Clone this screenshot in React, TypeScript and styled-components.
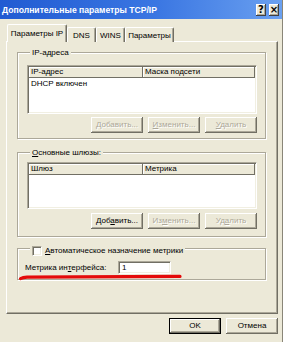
import React from "react";
import styled, { createGlobalStyle } from "styled-components";

const GlobalStyle = createGlobalStyle`
  html, body { margin: 0; padding: 0; background: #ece9d8; }
  body { font-family: "Liberation Sans", Arial, sans-serif; font-size: 8px; color: #000; }
  * { box-sizing: border-box; }
`;

const Window = styled.div`
  width: 283px;
  height: 342px;
  display: flex;
  flex-direction: column;
  background: #ece9d8;
  border-right: 1px solid #8a8678;
  overflow: hidden;
`;

const TitleBar = styled.div`
  height: 19px;
  display: flex;
  align-items: center;
  justify-content: space-between;
  padding: 0 3px 0 2px;
  background: linear-gradient(90deg, #215bd2 0%, #3a76e2 55%, #6aa0f0 100%);
`;

const Title = styled.span`
  color: #fff;
  font-weight: bold;
  font-size: 8.6px;
  white-space: nowrap;
`;

const TitleButtons = styled.div`
  display: flex;
  gap: 3px;
`;

const TitleButton = styled.div`
  width: 10px;
  height: 12px;
  background: #ece9d8;
  display: flex;
  align-items: center;
  justify-content: center;
  font-weight: bold;
  font-size: 10px;
  font-family: "DejaVu Sans", sans-serif;
  line-height: 1;
  color: #000;
  box-shadow: inset -1px -1px 0 #404040, inset 1px 1px 0 #fff, inset -2px -2px 0 #aca899;
`;

const Body = styled.div`
  flex: 1;
  display: flex;
  flex-direction: column;
  padding: 5px 4px 0 6px;
`;

const TabStrip = styled.div`
  display: flex;
  align-items: flex-end;
  height: 18px;
  padding-left: 1px;
  margin-bottom: -1px;
  position: relative;
  z-index: 1;
`;

const Tab = styled.div<{ $active?: boolean; $w: number }>`
  width: ${(p) => p.$w}px;
  height: ${(p) => (p.$active ? 18 : 15)}px;
  display: flex;
  align-items: center;
  justify-content: center;
  padding-bottom: ${(p) => (p.$active ? 1 : 0)}px;
  background: #ece9d8;
  border-top: 1px solid #fff;
  border-left: 1px solid #fff;
  border-right: 1px solid #716f64;
  box-shadow: inset -1px 0 0 #aca899;
  border-radius: 2px 2px 0 0;
  white-space: nowrap;
`;

const Panel = styled.div`
  height: 273px;
  background: #ece9d8;
  border-top: 1px solid #fff;
  border-left: 1px solid #fff;
  border-right: 1px solid #716f64;
  border-bottom: 1px solid #716f64;
  box-shadow: inset -1px -1px 0 #aca899;
  padding: 10px 11px 0 10px;
  display: flex;
  flex-direction: column;
`;

const Group = styled.div<{ $mt: number; $pb: number }>`
  position: relative;
  margin-top: ${(p) => p.$mt}px;
  border: 1px solid #aca899;
  box-shadow: inset 1px 1px 0 #fff, 1px 1px 0 #fff;
  display: flex;
  flex-direction: column;
  padding: 0 8px ${(p) => p.$pb}px 9px;
`;

const Legend = styled.div<{ $mt: number }>`
  align-self: flex-start;
  margin: ${(p) => p.$mt}px 0 0 3px;
  padding: 0 2px;
  height: 11px;
  line-height: 11px;
  background: #ece9d8;
  display: flex;
  align-items: center;
  gap: 3px;
  white-space: nowrap;
`;

const ListBox = styled.div<{ $h: number; $mt: number }>`
  height: ${(p) => p.$h}px;
  margin-top: ${(p) => p.$mt}px;
  background: #fff;
  border: 1px solid;
  border-color: #aca899 #fff #fff #aca899;
  box-shadow: inset 1px 1px 0 #716f64, inset -1px -1px 0 #f1efe2;
  padding: 1px;
  display: flex;
  flex-direction: column;
`;

const ListHeader = styled.div`
  display: grid;
  grid-template-columns: 114px 1fr;
  height: 11px;
`;

const HeaderCell = styled.div`
  background: #ece9d8;
  padding-left: 2px;
  line-height: 10px;
  box-shadow: inset -1px -1px 0 #716f64, inset 1px 1px 0 #fff;
  white-space: nowrap;
  overflow: hidden;
`;

const ListRow = styled.div`
  height: 11px;
  line-height: 11px;
  padding-left: 2px;
  white-space: nowrap;
`;

const ButtonRow = styled.div<{ $mt: number }>`
  display: flex;
  justify-content: flex-end;
  gap: 5px;
  margin-top: ${(p) => p.$mt}px;
`;

const Button = styled.button<{ $default?: boolean }>`
  width: 52px;
  height: 16px;
  padding: 0;
  font-family: inherit;
  font-size: 8px;
  color: #000;
  background: #ece9d8;
  border: ${(p) => (p.$default ? "1px solid #000" : "none")};
  box-shadow: inset -1px -1px 0 #716f64, inset 1px 1px 0 #fff, inset -2px -2px 0 #aca899;
  line-height: 1;
  &:disabled {
    color: #aca899;
    text-shadow: 1px 1px 0 #fff;
  }
`;

const Checkbox = styled.div`
  width: 10px;
  height: 10px;
  background: #fff;
  border: 1px solid;
  border-color: #aca899 #fff #fff #aca899;
  box-shadow: inset 1px 1px 0 #716f64, inset -1px -1px 0 #f1efe2;
`;

const MetricRow = styled.div`
  display: flex;
  align-items: center;
  height: 13px;
  margin-top: 5px;
  padding-left: 7px;
  margin-left: -9px;
`;

const MetricLabel = styled.span`
  width: 93px;
  white-space: nowrap;
`;

const Input = styled.div`
  width: 53px;
  height: 13px;
  background: #fff;
  border: 1px solid;
  border-color: #aca899 #fff #fff #aca899;
  box-shadow: inset 1px 1px 0 #716f64, inset -1px -1px 0 #f1efe2;
  padding-left: 3px;
  line-height: 11px;
`;

const Annotation = styled.svg`
  position: absolute;
  left: 2px;
  top: 25px;
  overflow: visible;
`;

const Footer = styled.div`
  display: flex;
  justify-content: flex-end;
  gap: 5px;
  margin-top: 4px;
`;

const tabs = [
  { label: "Параметры IP", w: 60, active: true },
  { label: "DNS", w: 29 },
  { label: "WINS", w: 29 },
  { label: "Параметры", w: 49 },
];

export default function App() {
  return (
    <>
      <GlobalStyle />
      <Window>
        <TitleBar>
          <Title>Дополнительные параметры TCP/IP</Title>
          <TitleButtons>
            <TitleButton>?</TitleButton>
            <TitleButton>×</TitleButton>
          </TitleButtons>
        </TitleBar>
        <Body>
          <TabStrip>
            {tabs.map((t) => (
              <Tab key={t.label} $w={t.w} $active={t.active}>
                {t.label}
              </Tab>
            ))}
          </TabStrip>
          <Panel>
            <Group $mt={0} $pb={5}>
              <Legend $mt={-6}>IP-адреса</Legend>
              <ListBox $h={49} $mt={7}>
                <ListHeader>
                  <HeaderCell>IP-адрес</HeaderCell>
                  <HeaderCell>Маска подсети</HeaderCell>
                </ListHeader>
                <ListRow>DHCP включен</ListRow>
              </ListBox>
              <ButtonRow $mt={3}>
                <Button disabled>
                  <u>Д</u>обавить...
                </Button>
                <Button disabled>
                  <u>И</u>зменить...
                </Button>
                <Button disabled>
                  <u>У</u>далить
                </Button>
              </ButtonRow>
            </Group>
            <Group $mt={13} $pb={7}>
              <Legend $mt={-6}>
                <span>
                  <u>О</u>сновные шлюзы:
                </span>
              </Legend>
              <ListBox $h={47} $mt={4}>
                <ListHeader>
                  <HeaderCell>Шлюз</HeaderCell>
                  <HeaderCell>Метрика</HeaderCell>
                </ListHeader>
              </ListBox>
              <ButtonRow $mt={4}>
                <Button>
                  Доб<u>а</u>вить...
                </Button>
                <Button disabled>
                  Из<u>м</u>енить...
                </Button>
                <Button disabled>
                  Уд<u>а</u>лить
                </Button>
              </ButtonRow>
            </Group>
            <Group $mt={11} $pb={5}>
              <Legend $mt={-4}>
                <Checkbox />
                <span>
                  <u>А</u>втоматическое назначение метрики
                </span>
              </Legend>
              <MetricRow>
                <MetricLabel>
                  Метрика ин<u>т</u>ерфейса:
                </MetricLabel>
                <Input>1</Input>
              </MetricRow>
              <Annotation width="162" height="6" viewBox="0 0 162 6">
                <path
                  d="M0.5 4.6 Q3 3.4 7 3.1 L160 2.4"
                  fill="none"
                  stroke="#e40a0a"
                  strokeWidth="3.2"
                  strokeLinecap="round"
                />
              </Annotation>
            </Group>
          </Panel>
          <Footer>
            <Button $default>OK</Button>
            <Button>Отмена</Button>
          </Footer>
        </Body>
      </Window>
    </>
  );
}
